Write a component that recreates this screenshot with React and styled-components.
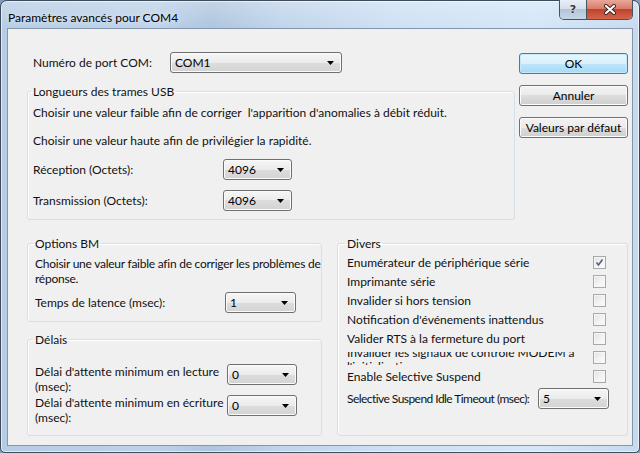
import React from 'react';
import styled, { createGlobalStyle } from 'styled-components';

const GlobalStyle = createGlobalStyle`
html, body {
  margin: 0;
  padding: 0;
  width: 640px;
  height: 453px;
  overflow: hidden;
  background: #7f9bb8;
}
body {
  font-family: 'Lato', 'Liberation Sans', sans-serif;
  font-size: 12px;
  color: #111;
}
#root { height: 100%; }
`;

const Window = styled.div`
box-sizing: border-box;
height: 453px;
display: flex;
flex-direction: column;
padding: 0 6px 6px;
border: 1px solid #3d4b5b;
border-radius: 7px 7px 5px 5px;
background:
  linear-gradient(180deg, rgba(255,255,255,0.25) 0px, rgba(255,255,255,0) 28px),
  linear-gradient(90deg, #b6cce4 0%, #bdd2e9 24%, #aec5de 33%, #c0d4ea 44%, #cde0f4 62%, #d4e6f8 84%, #c6daef 100%);
box-shadow: inset 0 0 0 1px rgba(255,255,255,0.6);
`;

const TitleBar = styled.div`
height: 28px;
display: flex;
justify-content: space-between;
`;

const Title = styled.div`
align-self: center;
padding: 5px 0 0 1px;
font-size: 12px;
color: #000;
text-shadow: 0 0 6px rgba(255,255,255,0.9);
`;

const CaptionButtons = styled.div`
display: flex;
height: 19px;
margin-top: -1px;
border: 1px solid #46525f;
border-top: none;
border-radius: 0 0 5px 5px;
overflow: hidden;
`;

const HelpButton = styled.div`
width: 26px;
display: flex;
align-items: center;
justify-content: center;
border-right: 1px solid #46525f;
background: linear-gradient(180deg, #e8eff7 0%, #d3dfeb 45%, #b4c4d6 50%, #c6d6e7 100%);
color: #2d3640;
font-family: 'DejaVu Sans', sans-serif;
font-size: 11px;
font-weight: bold;
text-shadow: 0 0 2px #fff;
`;

const CloseButton = styled.div`
width: 45px;
display: flex;
align-items: center;
justify-content: center;
background: linear-gradient(180deg, #e9a798 0%, #d97c6a 45%, #c2412c 50%, #d2654d 100%);
`;

const Client = styled.div`
flex: 1;
display: flex;
flex-direction: column;
padding: 23px 4px 9px 19px;
border: 1px solid #8396ab;
background: #f0f0f0;
`;

const Top = styled.div`
display: flex;
gap: 4px;
`;

const Main = styled.div`
width: 488px;
display: flex;
flex-direction: column;
`;

const ButtonColumn = styled.div`
flex: 1;
display: flex;
flex-direction: column;
gap: 11px;
padding-top: 1px;
`;

const Button = styled.div`
box-sizing: border-box;
height: 21px;
display: flex;
align-items: center;
justify-content: center;
border: 1px solid ${p => (p.$default ? '#3c7fb1' : '#707070')};
border-radius: 3px;
background: ${p => (p.$default
    ? 'linear-gradient(180deg, #eaf6fd 0%, #d9f0fc 50%, #bee6fd 50%, #a7d9f5 100%)'
    : 'linear-gradient(180deg, #f2f2f2 0%, #ebebeb 50%, #dddddd 50%, #cfcfcf 100%)')};
box-shadow: inset 0 0 0 1px ${p => (p.$default ? '#c5e8fa' : '#fcfcfc')};
color: #000;
`;

const Row = styled.div`
display: flex;
align-items: ${p => p.$align || 'center'};
margin-top: ${p => p.$mt || 0}px;
padding-left: ${p => p.$pl || 0}px;
`;

const Label = styled.div`
width: ${p => p.$w}px;
flex: none;
line-height: 15px;
`;

const Text = styled.div`
line-height: 15px;
margin-top: ${p => p.$mt || 0}px;
letter-spacing: ${p => p.$ls || 0}px;
white-space: pre-wrap;
`;

const Combo = styled.div`
box-sizing: border-box;
width: ${p => p.$w}px;
height: 21px;
flex: none;
display: flex;
align-items: center;
justify-content: space-between;
padding: 0 7px 0 4px;
border: 1px solid #707070;
border-radius: 3px;
background: linear-gradient(180deg, #f6f6f6 0%, #ebebeb 50%, #dddddd 50%, #d3d3d3 100%);
box-shadow: inset 0 0 0 1px #fbfbfb;
color: #000;
`;

const Group = styled.fieldset`
box-sizing: border-box;
margin: ${p => p.$mt || 0}px 0 0;
padding: ${p => p.$pad};
min-width: 0;
flex: ${p => (p.$grow ? 1 : 'none')};
border: 1px solid #d5dfe5;
border-radius: 3px;
box-shadow: inset 1px 1px 0 #fff;
`;

const Legend = styled.legend`
padding: 0 2px;
margin-left: -2px;
line-height: 15px;
color: #111;
`;

const Bottom = styled.div`
display: flex;
gap: 15px;
margin-top: 16px;
`;

const LeftColumn = styled.div`
width: 295px;
display: flex;
flex-direction: column;
`;

const CheckRow = styled.div`
height: ${p => p.$h || 19}px;
display: flex;
align-items: center;
justify-content: space-between;
margin-top: ${p => p.$mt || 0}px;
`;

const NoWrap = styled.span`
white-space: nowrap;
letter-spacing: ${p => p.$ls || 0}px;
`;

const ClipLabel = styled.div`
height: 13px;
overflow: hidden;
line-height: 14px;
margin-top: 1px;
`;

const ClipInner = styled.div`
width: 245px;
margin-top: -6px;
`;

const Box = styled.div`
box-sizing: border-box;
width: 13px;
height: 13px;
margin-right: 3px;
display: flex;
align-items: center;
justify-content: center;
border: 1px solid #a9a9a9;
background: linear-gradient(135deg, #e2e2e2 0%, #f4f4f4 60%, #fbfbfb 100%);
box-shadow: inset 0 0 0 1px #f6f6f6;
`;

const Arrow = () => (
  <svg width="7" height="4" viewBox="0 0 7 4">
    <polygon points="0,0 7,0 3.5,4" fill="#000" />
  </svg>
);

const Select = ({ w, value }) => (
  <Combo $w={w}>
    <span>{value}</span>
    <Arrow />
  </Combo>
);

const Check = ({ checked }) => (
  <Box>
    {checked && (
      <svg width="9" height="9" viewBox="0 0 9 9">
        <path d="M1.5 4.5 L3.5 7 L7.5 1.5" fill="none" stroke="#52627e" strokeWidth="1.6" />
      </svg>
    )}
  </Box>
);

const divers = [
  { label: 'Enumérateur de périphérique série', checked: true },
  { label: 'Imprimante série' },
  { label: 'Invalider si hors tension' },
  { label: "Notification d'événements inattendus" },
  { label: 'Valider RTS à la fermeture du port' },
  { label: "Invalider les signaux de contrôle MODEM à l'initialisation", clipped: true },
  { label: 'Enable Selective Suspend' },
];

export default function App() {
  return (
    <>
      <GlobalStyle />
      <Window>
        <TitleBar>
          <Title>Paramètres avancés pour COM4</Title>
          <CaptionButtons>
            <HelpButton>?</HelpButton>
            <CloseButton>
              <svg width="14" height="11" viewBox="0 0 14 11">
                <path d="M3 2 L11 9 M11 2 L3 9" stroke="#3a2420" strokeWidth="4" strokeLinecap="round" />
                <path d="M3 2 L11 9 M11 2 L3 9" stroke="#fff" strokeWidth="2.2" strokeLinecap="round" />
              </svg>
            </CloseButton>
          </CaptionButtons>
        </TitleBar>
        <Client>
          <Top>
            <Main>
              <Row $pl={6}>
                <Label $w={137}>Numéro de port COM:</Label>
                <Select w={172} value="COM1" />
              </Row>
              <Group $mt={11} $pad="6px 5px 8px 5px">
                <Legend>Longueurs des trames USB</Legend>
                <Text>{"Choisir une valeur faible afin de corriger  l'apparition d'anomalies à débit réduit."}</Text>
                <Text $mt={13}>Choisir une valeur haute afin de privilégier la rapidité.</Text>
                <Row $mt={11}>
                  <Label $w={190}>Réception (Octets):</Label>
                  <Select w={69} value="4096" />
                </Row>
                <Row $mt={10}>
                  <Label $w={190}>Transmission (Octets):</Label>
                  <Select w={69} value="4096" />
                </Row>
              </Group>
            </Main>
            <ButtonColumn>
              <Button $default>OK</Button>
              <Button>Annuler</Button>
              <Button>Valeurs par défaut</Button>
            </ButtonColumn>
          </Top>
          <Bottom>
            <LeftColumn>
              <Group $pad="5px 0 8px 7px">
                <Legend>Options BM</Legend>
                <Text $ls={-0.25}>Choisir une valeur faible afin de corriger les problèmes de réponse.</Text>
                <Row $mt={6}>
                  <Label $w={190}>Temps de latence (msec):</Label>
                  <Select w={71} value="1" />
                </Row>
              </Group>
              <Group $mt={10} $pad="17px 7px 10px 7px">
                <Legend>Délais</Legend>
                <Row $align="flex-start">
                  <Label $w={192}>Délai d'attente minimum en lecture (msec):</Label>
                  <Select w={70} value="0" />
                </Row>
                <Row $align="flex-start" $mt={1}>
                  <Label $w={192}>Délai d'attente minimum en écriture (msec):</Label>
                  <Select w={70} value="0" />
                </Row>
              </Group>
            </LeftColumn>
            <Group $grow $pad="2px 18px 8px 9px">
              <Legend>Divers</Legend>
              {divers.map(item => (
                <CheckRow key={item.label}>
                  {item.clipped ? (
                    <ClipLabel>
                      <ClipInner>{item.label}</ClipInner>
                    </ClipLabel>
                  ) : (
                    <span>{item.label}</span>
                  )}
                  <Check checked={item.checked} />
                </CheckRow>
              ))}
              <CheckRow $mt={2} $h={21}>
                <NoWrap $ls={-0.55}>Selective Suspend Idle Timeout (msec):</NoWrap>
                <Select w={71} value="5" />
              </CheckRow>
            </Group>
          </Bottom>
        </Client>
      </Window>
    </>
  );
}
